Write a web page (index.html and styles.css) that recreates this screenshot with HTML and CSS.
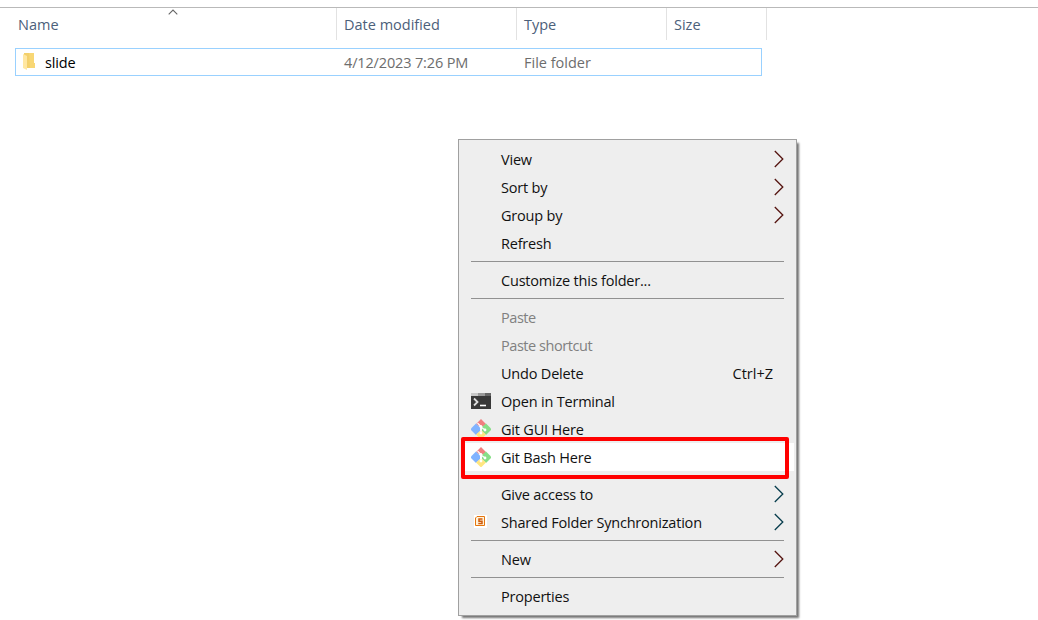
FILE: index.html
```html
<!DOCTYPE html>
<html lang="en">
<head>
<meta charset="utf-8">
<title>Folder</title>
<link rel="stylesheet" href="styles.css">
</head>
<body>
<svg class="defs" aria-hidden="true">
  <symbol id="chevron" viewBox="0 0 10 18"><path d="M.8 1 8.8 9 .8 17" fill="none" stroke="currentColor" stroke-width="1.3"/></symbol>
  <symbol id="git" viewBox="0 0 20 20">
    <path d="M10 0 15 5 12 8 10 6 8 7 5 5Z" fill="#f07f7f"/>
    <path d="M5 4.500 9 8.500V12L5 16 0 11V9.500Z" fill="#80b3ff"/>
    <path d="M15 4.500 20 9.500V11L15 16 11 12V8Z" fill="#87de87"/>
    <path d="M9 12 11 12 15 15.500 10.500 20H9.500L5 15.500Z" fill="#ffe680"/>
    <path d="M6.500 4 10 7.500V14M10 8 14 11" fill="none" stroke="#fff" stroke-width="1.100"/>
    <circle cx="10" cy="7.500" r="1.300" fill="#fff"/><circle cx="10" cy="14" r="1.400" fill="#fff"/><circle cx="14" cy="11" r="1.400" fill="#fff"/>
  </symbol>
</svg>
<main class="explorer">
  <header class="columns">
    <div class="col name">Name
      <svg class="sort" viewBox="0 0 10 6"><path d="M.7 5.300 5 1 9.300 5.300" fill="none" stroke="#666" stroke-width="1.100"/></svg>
    </div>
    <div class="col date">Date modified</div>
    <div class="col type">Type</div>
    <div class="col size">Size</div>
  </header>
  <div class="row">
    <div class="file">
      <svg class="folder" viewBox="0 0 12 17"><path d="M1 0H11V10H12V15H4L1 14Z" fill="#f3d06c"/><path d="M6 0H11V10H12V15H7Z" fill="#f8d775"/><path d="M0 1 4 3V17L0 15Z" fill="#ffe7a2"/></svg>
      <span>slide</span>
    </div>
    <div class="modified">4/12/2023 7:26 PM</div>
    <div class="kind">File folder</div>
  </div>
</main>
<nav class="menu">
  <div class="item"><span class="label">View</span><svg class="arrow"><use href="#chevron"/></svg></div>
  <div class="item"><span class="label">Sort by</span><svg class="arrow"><use href="#chevron"/></svg></div>
  <div class="item"><span class="label">Group by</span><svg class="arrow"><use href="#chevron"/></svg></div>
  <div class="item"><span class="label">Refresh</span></div>
  <div class="sep"></div>
  <div class="item"><span class="label">Customize this folder...</span></div>
  <div class="sep"></div>
  <div class="item disabled"><span class="label">Paste</span></div>
  <div class="item disabled"><span class="label">Paste shortcut</span></div>
  <div class="item"><span class="label">Undo Delete</span><span class="keys">Ctrl+Z</span></div>
  <div class="item"><span class="icon"><svg width="20" height="16" viewBox="0 0 20 16"><path d="M0 0H20V16H0Z" fill="#383838"/><path d="M0 0H7V3H0Z" fill="#c8c8c8"/><path d="M7 0H14V3H7Z" fill="#999"/><path d="M14 0H20V3H14Z" fill="#666"/><path d="M3 5.500 6.500 9 3 12.500" fill="none" stroke="#ddd" stroke-width="1.800"/><path d="M9 12.500H15" stroke="#fff" stroke-width="1.600"/></svg></span><span class="label">Open in Terminal</span></div>
  <div class="item"><span class="icon"><svg width="20" height="20"><use href="#git"/></svg></span><span class="label">Git GUI Here</span></div>
  <div class="item active"><span class="icon"><svg width="20" height="20"><use href="#git"/></svg></span><span class="label">Git Bash Here</span></div>
  <div class="sep"></div>
  <div class="item"><span class="label">Give access to</span><svg class="arrow cool"><use href="#chevron"/></svg></div>
  <div class="item"><span class="icon shared"><svg width="13" height="13" viewBox="0 0 13 13"><path d="M0 0H13V13H0Z" fill="#fff"/><path d="M3 1.500H10.500V10.500H1.500V3Z" fill="#fff3dc" stroke="#e5760e"/><path d="M8.500 4H5V6.200H8V8.500H4.300" fill="none" stroke="#d15c0b" stroke-width="1.500"/></svg></span><span class="label">Shared Folder Synchronization</span><svg class="arrow cool"><use href="#chevron"/></svg></div>
  <div class="sep"></div>
  <div class="item"><span class="label">New</span><svg class="arrow"><use href="#chevron"/></svg></div>
  <div class="sep"></div>
  <div class="item"><span class="label">Properties</span></div>
  <div class="callout"></div>
</nav>
</body>
</html>
```
FILE: styles.css
```css
* { box-sizing: border-box; }
body { margin: 0; height: 620px; overflow: hidden; background: #fff; font: 14.5px/28px "Open Sans", "Noto Sans", sans-serif; letter-spacing: -.15px; white-space: nowrap; }
svg { display: block; }
.defs { position: absolute; width: 0; height: 0; }
.explorer { padding-top: 7px; }
.columns { display: grid; grid-template-columns: 337px 180px 150px 100px; height: 33px; border-top: 1px solid #b9b9b9; color: #4c607a; line-height: 34px; letter-spacing: 0; }
.col { position: relative; border-right: 1px solid #e2e2e2; padding-left: 7px; height: 32px; }
.name { padding-left: 18px; }
.sort { position: absolute; left: 168px; top: 1px; width: 10px; height: 6px; }
.row { display: grid; grid-template-columns: 328px 180px 1fr; width: 747px; height: 28px; margin: 8px 0 0 15px; border: 1px solid #99d1ff; color: #6d6d6d; line-height: 27px; }
.kind { letter-spacing: 0; }
.file { display: flex; gap: 10px; padding-left: 7px; color: #000; }
.folder { width: 12px; height: 17px; margin-top: 4px; }
.menu { position: absolute; left: 458px; top: 139px; width: 339px; height: 477px; padding: 5px 2px; background: #eee; border: 1px solid #a0a0a0; box-shadow: 3px 3px 2px -1px rgba(0,0,0,.55); color: #111; letter-spacing: -.2px; }
.item { display: grid; grid-template-columns: 20px 1fr auto; column-gap: 10px; align-items: center; height: 28px; padding: 0 10px; }
.label, .keys { grid-row: 1; line-height: 26px; padding-top: 2px; }
.label { grid-column: 2; }
.keys { grid-column: 3; padding-right: 11px; letter-spacing: 0; }
.icon { grid-column: 1; grid-row: 1; display: flex; justify-content: center; }
.shared { padding: 0 1px 2px 0; }
.arrow { width: 10px; height: 18px; grid-column: 3; grid-row: 1; color: #54130f; margin-top: -1px; }
.cool { color: #063c4c; }
.disabled { color: #808080; letter-spacing: -.45px; }
.active { background: #fff; }
.sep { height: 1px; margin: 4px 10px; background: #919191; }
.callout { position: absolute; left: 2px; top: 297px; width: 328px; height: 42px; border: 4px solid #f00; border-radius: 2px; }
```
